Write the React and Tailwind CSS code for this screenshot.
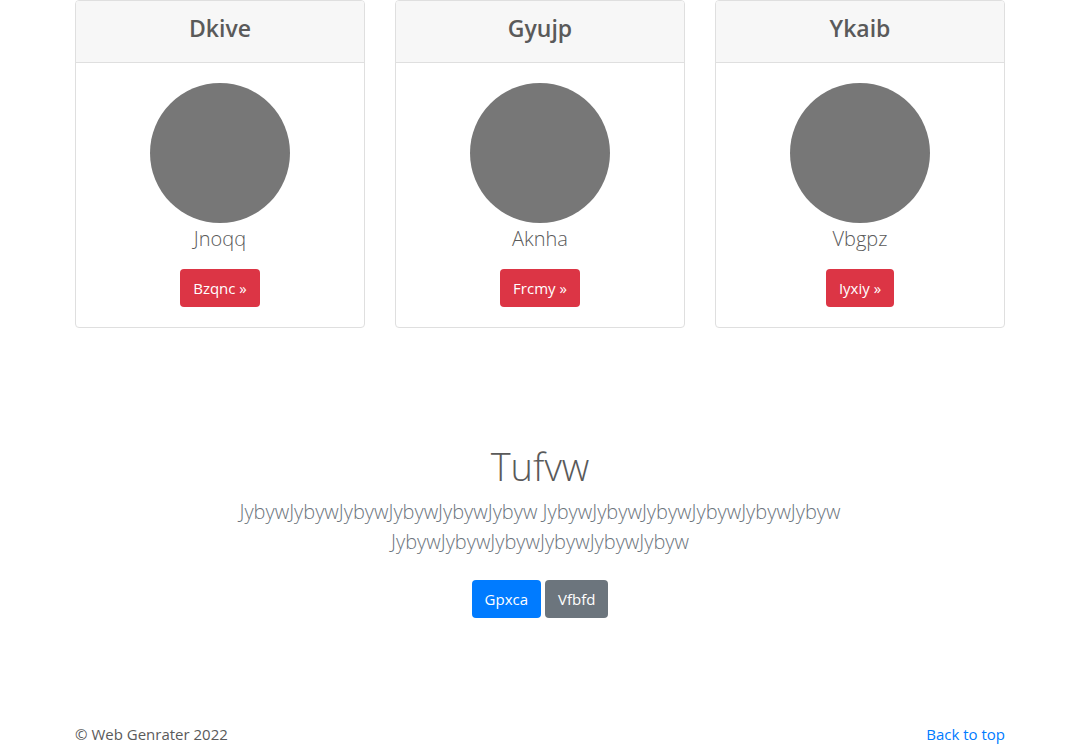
const cards = [
  { title: 'Dkive', label: 'Jnoqq', action: 'Bzqnc »' },
  { title: 'Gyujp', label: 'Aknha', action: 'Frcmy »' },
  { title: 'Ykaib', label: 'Vbgpz', action: 'Iyxiy »' },
];

function Card({ title, label, action }) {
  return (
    <article className="overflow-hidden rounded border border-[#dfdfdf] bg-white text-center">
      <header className="border-b border-[#dfdfdf] bg-[#f7f7f7] px-5 pt-[13px] pb-5">
        <h2 className="text-[23px] leading-7 font-semibold text-[#5a5a5a]">{title}</h2>
      </header>
      <div className="flex flex-col items-center p-5">
        <div className="size-[140px] rounded-full bg-[#777777]" />
        <p className="mb-3.5 text-[20px] leading-8 font-light text-[#5a5a5a]">{label}</p>
        <button type="button" className="h-[38px] rounded bg-[#dc3545] px-[13px] text-white">
          {action}
        </button>
      </div>
    </article>
  );
}

export default function App() {
  return (
    <div className="bg-white font-['Open_Sans','Noto_Sans',sans-serif] text-[15px] leading-6 text-[#5a5a5a]">
      <main className="mx-auto max-w-[960px] px-[15px]">
        <section className="grid grid-cols-1 gap-[30px] sm:grid-cols-3">
          {cards.map((card) => (
            <Card key={card.title} {...card} />
          ))}
        </section>
        <section className="px-4 pt-[114px] pb-[104px] text-center md:px-[155px]">
          <h1 className="mb-[7px] text-[38px] leading-12 font-light text-[#5a5a5a]">Tufvw</h1>
          <p className="mb-[23px] text-[20px] leading-[30px] font-light text-[#6c757d]">
            JybywJybywJybywJybywJybywJybyw JybywJybywJybywJybywJybywJybyw JybywJybywJybywJybywJybywJybyw
          </p>
          <div className="flex justify-center gap-1">
            <button type="button" className="h-[38px] rounded bg-[#007bff] px-[13px] text-white">Gpxca</button>
            <button type="button" className="h-[38px] rounded bg-[#6c757d] px-[13px] text-white">Vfbfd</button>
          </div>
        </section>
      </main>
      <footer className="mx-auto flex max-w-[960px] justify-between px-[15px]">
        <p>© Web Genrater 2022</p>
        <a href="#" className="text-[#007bff]">Back to top</a>
      </footer>
    </div>
  );
}
